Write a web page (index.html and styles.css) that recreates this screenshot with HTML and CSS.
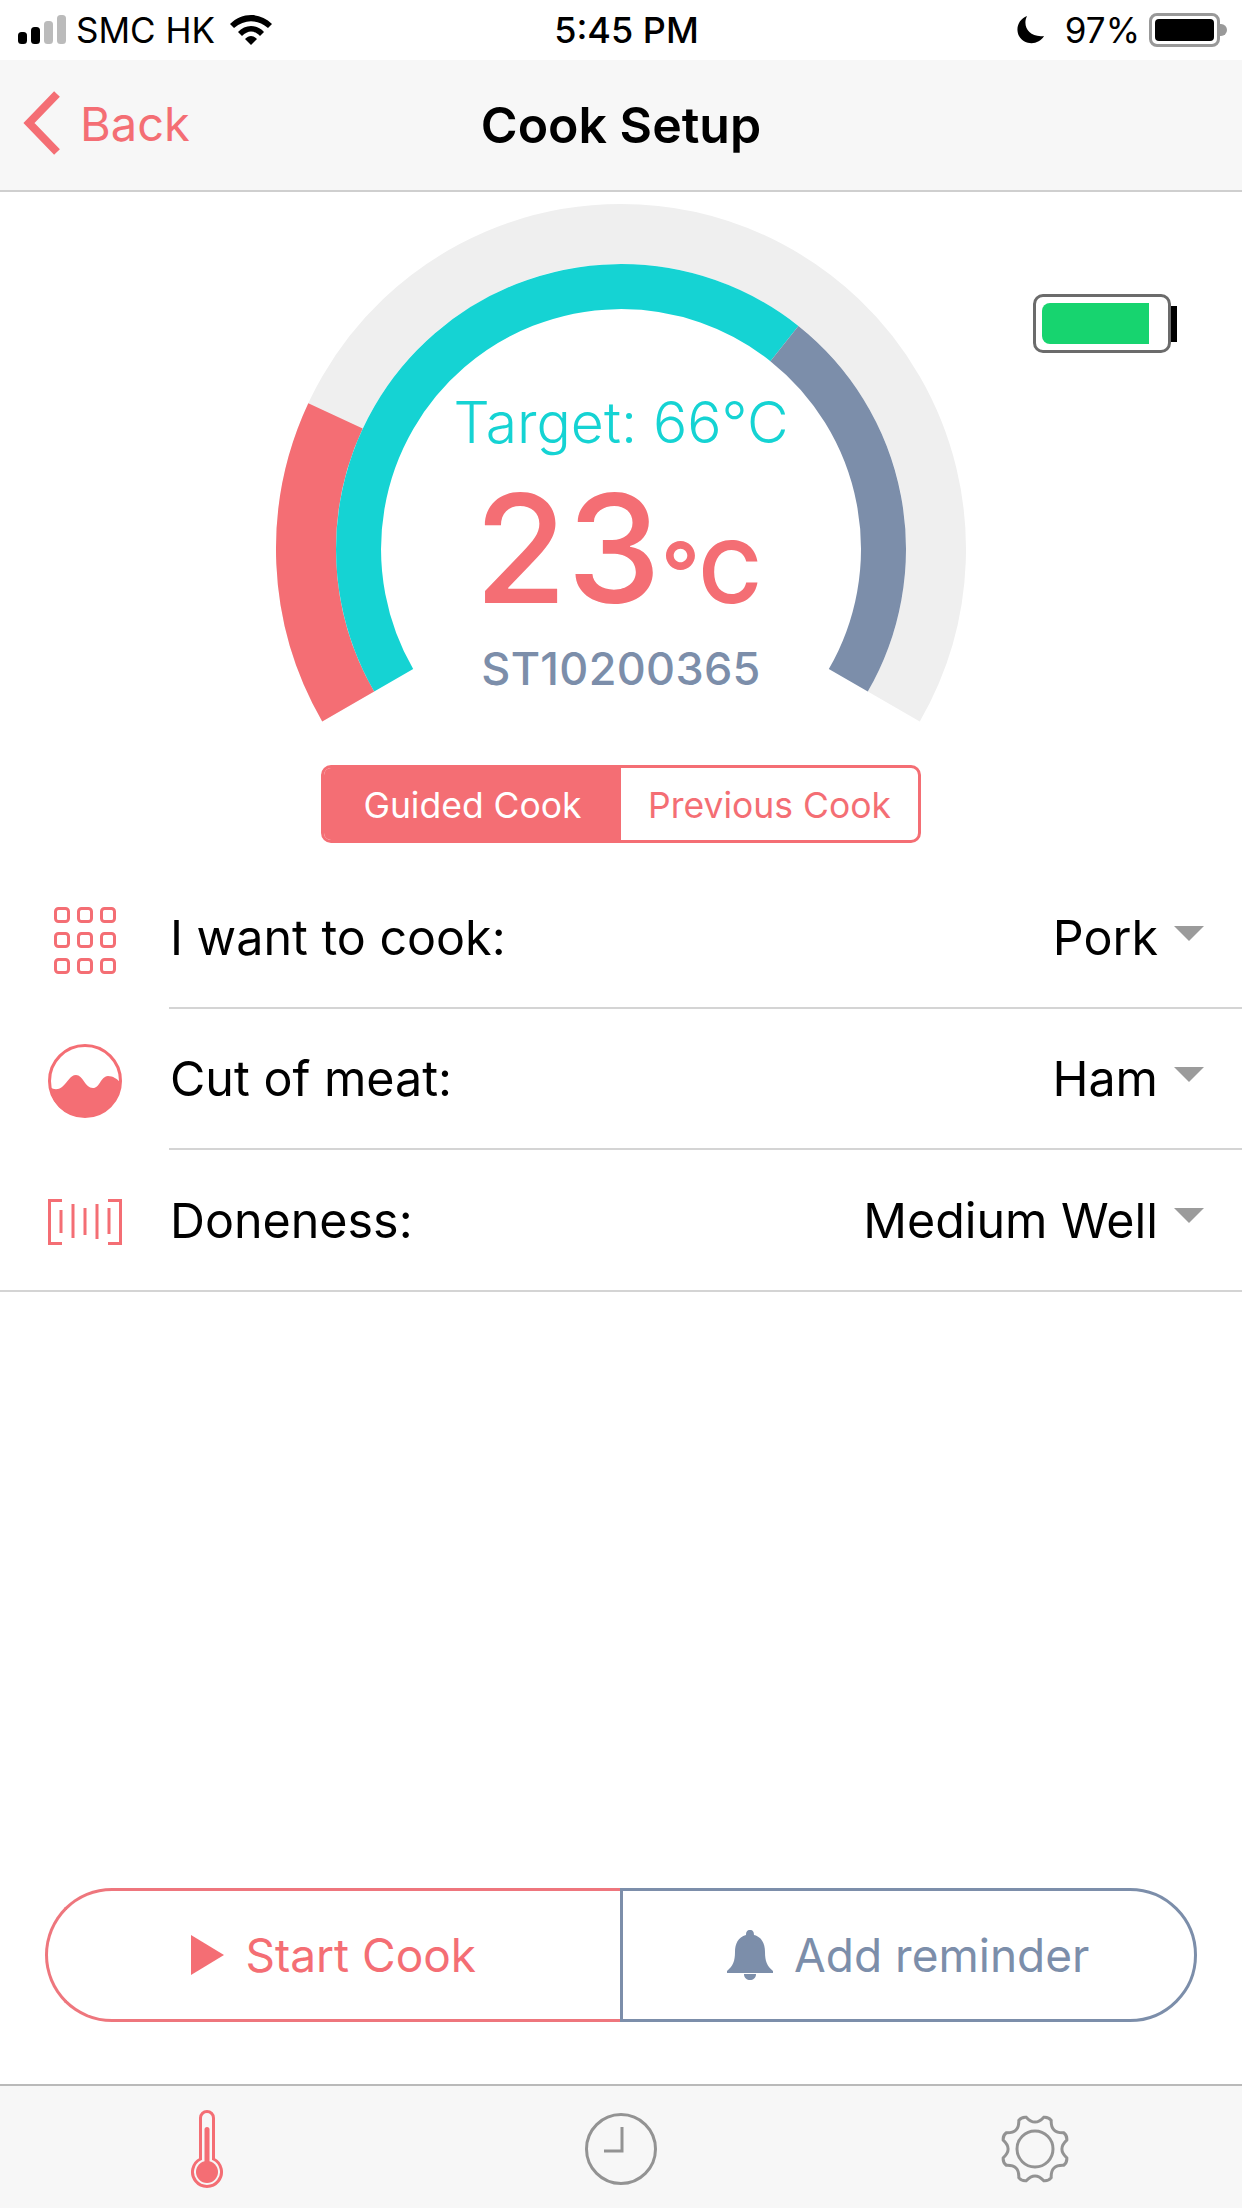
FILE: index.html

```html
<!DOCTYPE html>
<html lang="en">
<head>
  <meta charset="UTF-8" />
  <meta name="viewport" content="width=device-width, initial-scale=1.0"/>
  <title>Cook Setup</title>
  <link rel="stylesheet" href="styles.css">
</head>
<body>
  <div class="page">
    <div class="status-bar">
      <div class="status-left">
        <svg class="signal" width="48" height="30" viewBox="0 0 48 30">
          <rect x="0" y="17" width="9" height="12" rx="3.500" fill="#000"/>
          <rect x="13" y="12" width="9" height="17" rx="3.500" fill="#000"/>
          <rect x="26" y="6" width="9" height="23" rx="3.500" fill="#bbb"/>
          <rect x="39" y="0" width="9" height="29" rx="3.500" fill="#bbb"/>
        </svg>
        <span>SMC HK</span>
        <svg class="wifi" width="42" height="30" viewBox="0 0 42 30">
          <path d="M0 9 C12 -3 30 -3 42 9 L38 13 C27 4 15 4 4 13Z" fill="#000"/>
          <path d="M8 17 C15 9 27 9 34 17 L30 21 C24 15 18 15 12 21Z" fill="#000"/>
          <path d="M15 24 C19 20 23 20 27 24 L21 30Z" fill="#000"/>
        </svg>
      </div>
      <div class="status-time">5:45 PM</div>
      <div class="status-right">
        <svg class="moon" width="28" height="28" viewBox="0 0 28 28">
          <path d="M10 0 C5 10 12 22 27 20 C22 29 8 30 2 20 C-2 12 2 3 10 0Z" fill="#000"/>
        </svg>
        <span>97%</span>
        <div class="phone-batt"><div class="phone-batt-fill"></div></div>
        <div class="phone-batt-nub"></div>
      </div>
    </div>

    <div class="nav-bar">
      <div class="back">
        <svg width="40" height="64" viewBox="0 0 40 64">
          <path d="M34 3 L6 32 L34 61" fill="none" stroke="#f46e74" stroke-width="8"/>
        </svg>
        <span>Back</span>
      </div>
      <div class="nav-title">Cook Setup</div>
    </div>

    <div class="gauge">
      <svg class="gauge-svg" width="1242" height="570" viewBox="0 192 1242 570">
        <path d="M348.2 706.5 A315 315 0 1 1 893.8 706.5" fill="none" stroke="#efefef" stroke-width="60"/>
        <path d="M348.2 706.5 A315 315 0 0 1 335.5 415.9" fill="none" stroke="#f46e74" stroke-width="60"/>
        <path d="M393.7 680.3 A262.5 262.5 0 0 1 784.4 343.6" fill="none" stroke="#15d3d3" stroke-width="45"/>
        <path d="M784.4 343.6 A262.5 262.5 0 0 1 848.3 680.3" fill="none" stroke="#7c8eaa" stroke-width="45"/>
      </svg>
      <div class="gauge-text">
        <div class="target">Target: 66°C</div>
        <div class="temp">23<span class="temp-unit">°c</span></div>
        <div class="serial">ST10200365</div>
      </div>
      <div class="probe-batt">
        <div class="probe-batt-body"><div class="probe-batt-fill"></div></div>
        <div class="probe-batt-nub"></div>
      </div>
    </div>

    <div class="segment">
      <div class="segment-item segment-active">Guided Cook</div>
      <div class="segment-item">Previous Cook</div>
    </div>

    <div class="rows">
      <div class="row">
        <div class="row-icon">
          <svg width="62" height="67" viewBox="0 0 62 67" fill="none" stroke="#f46e74" stroke-width="3">
            <rect x="1.500" y="1.500" width="13" height="13" rx="3"/><rect x="24.500" y="1.500" width="13" height="13" rx="3"/><rect x="47.500" y="1.500" width="13" height="13" rx="3"/>
            <rect x="1.500" y="26.500" width="13" height="13" rx="3"/><rect x="24.500" y="26.500" width="13" height="13" rx="3"/><rect x="47.500" y="26.500" width="13" height="13" rx="3"/>
            <rect x="1.500" y="52.500" width="13" height="13" rx="3"/><rect x="24.500" y="52.500" width="13" height="13" rx="3"/><rect x="47.500" y="52.500" width="13" height="13" rx="3"/>
          </svg>
        </div>
        <div class="row-main">
          <span>I want to cook:</span>
          <span class="row-value">Pork<i class="caret"></i></span>
        </div>
      </div>
      <div class="row">
        <div class="row-icon">
          <svg width="74" height="74" viewBox="0 0 74 74">
            <circle cx="37" cy="37" r="35.500" fill="none" stroke="#f46e74" stroke-width="3"/>
            <path d="M2 43 C6 46 10 46 14 43 C20 38 22 31 28 31 C35 31 37 44 45 44 C52 44 52 33 60 32 C65 32 69 35 72 38 C72 58 56 73 37 73 C18 73 3 60 2 43Z" fill="#f46e74"/>
          </svg>
        </div>
        <div class="row-main">
          <span>Cut of meat:</span>
          <span class="row-value">Ham<i class="caret"></i></span>
        </div>
      </div>
      <div class="row row-last">
        <div class="row-icon">
          <svg width="74" height="46" viewBox="0 0 74 46" fill="none" stroke="#f46e74" stroke-width="3">
            <path d="M14 1.500 H1.500 V44.500 H14"/>
            <path d="M60 1.500 H72.500 V44.500 H60"/>
            <path d="M13 11 V34 M25 5 V39 M37 9 V36 M49 5 V40 M61 9 V35"/>
          </svg>
        </div>
        <div class="row-main">
          <span>Doneness:</span>
          <span class="row-value">Medium Well<i class="caret"></i></span>
        </div>
      </div>
    </div>

    <div class="spacer"></div>

    <div class="actions">
      <div class="action action-start">
        <svg width="33" height="40" viewBox="0 0 33 40"><path d="M0 0 L33 20 L0 40Z" fill="#f46e74"/></svg>
        <span>Start Cook</span>
      </div>
      <div class="action action-remind">
        <svg width="46" height="50" viewBox="0 0 46 50">
          <path d="M23 0 C26 0 27 2 27 5 C35 7 38 14 38 22 C38 31 40 36 46 41 L46 43 L0 43 L0 41 C6 36 8 31 8 22 C8 14 11 7 19 5 C19 2 20 0 23 0Z" fill="#7c8eaa"/>
          <path d="M17 44 H29 C29 48 26 50 23 50 C20 50 17 48 17 44Z" fill="#7c8eaa"/>
        </svg>
        <span>Add reminder</span>
      </div>
    </div>

    <div class="tab-bar">
      <div class="tab">
        <svg width="34" height="79" viewBox="0 0 34 79">
          <path d="M10.500 8 A6.500 6.500 0 0 1 23.500 8 V49 A14.500 14.500 0 1 1 10.500 49Z" fill="none" stroke="#f46e74" stroke-width="3"/>
          <rect x="14.500" y="17" width="5" height="42" rx="2.500" fill="#f46e74"/>
          <circle cx="17" cy="62" r="11" fill="#f46e74"/>
        </svg>
      </div>
      <div class="tab">
        <svg width="72" height="72" viewBox="0 0 72 72" fill="none" stroke="#939393" stroke-width="3">
          <circle cx="36" cy="36" r="34.500"/>
          <path d="M37 14 V38 H19"/>
        </svg>
      </div>
      <div class="tab">
        <svg width="70" height="68" viewBox="0 0 70 68" fill="none" stroke="#939393" stroke-width="3">
          <circle cx="35" cy="34" r="18"/>
          <path d="M26.200 2.200 Q35 12 43.800 2.200 Q48.400 1.700 51.200 5.300 Q50.600 18.400 63.700 17.800 Q67.300 20.600 66.800 25.200 Q57 34 66.800 42.800 Q67.300 47.400 63.700 50.200 Q50.600 49.600 51.200 62.700 Q48.400 66.300 43.800 65.800 Q35 56 26.200 65.800 Q21.600 66.300 18.800 62.700 Q19.400 49.600 6.300 50.200 Q2.700 47.400 3.200 42.800 Q13 34 3.200 25.200 Q2.700 20.600 6.300 17.800 Q19.400 18.400 18.800 5.300 Q21.600 1.700 26.200 2.200Z"/>
        </svg>
      </div>
    </div>
  </div>
</body>
</html>
```

FILE: styles.css

```css
* {
  box-sizing: border-box;
}
body {
  margin: 0;
  font-family: Inter, "Liberation Sans", sans-serif;
  background: #fff;
  color: #000;
}
.page {
  width: 1242px;
  height: 2208px;
  display: flex;
  flex-direction: column;
  overflow: hidden;
}

/* status bar */
.status-bar {
  height: 60px;
  display: flex;
  align-items: center;
  padding: 0 15px 0 18px;
  font-size: 35px;
}
.status-left, .status-right {
  flex: 1;
  display: flex;
  align-items: center;
}
.status-right {
  justify-content: flex-end;
}
.signal {
  margin-right: 10px;
}
.wifi {
  margin-left: 15px;
}
.status-time {
  margin-left: 8px;
  font-size: 36px;
  font-weight: 500;
}
.moon {
  margin-right: 20px;
}
.phone-batt {
  margin-left: 9px;
  width: 71px;
  height: 34px;
  border: 3px solid #999;
  border-radius: 8px;
  padding: 3px;
}
.phone-batt-fill {
  height: 100%;
  background: #000;
  border-radius: 4px;
}
.phone-batt-nub {
  width: 7px;
  height: 12px;
  background: #999;
  border-radius: 0 6px 6px 0;
}

/* nav */
.nav-bar {
  height: 132px;
  background: #f7f7f7;
  border-bottom: 2px solid #cfcfcf;
  display: grid;
  grid-template-columns: 1fr auto 1fr;
  align-items: center;
  padding-left: 23px;
  padding-right: 23px;
}
.back {
  display: flex;
  align-items: center;
  gap: 17px;
  margin-bottom: 4px;
  color: #f46e74;
  font-size: 47px;
}
.nav-title {
  font-size: 50px;
  font-weight: 600;
}

/* gauge */
.gauge {
  height: 570px;
  position: relative;
}
.gauge-svg {
  display: block;
}
.gauge-text {
  position: absolute;
  left: 0;
  right: 0;
  top: 193px;
  text-align: center;
}
.target {
  color: #15d3d3;
  font-size: 57px;
  font-weight: 300;
  line-height: 76px;
}
.temp {
  color: #f46e74;
  font-size: 150px;
  font-weight: 500;
  line-height: 144px;
  margin-top: 16px;
  margin-bottom: -3px;
  padding-right: 6px;
}
.temp-unit {
  font-size: 85px;
  font-weight: 600;
  text-transform: uppercase;
}
.serial {
  color: #7c8eaa;
  font-size: 45px;
  font-weight: 500;
  letter-spacing: 0.3px;
  line-height: 54px;
}
.probe-batt {
  position: absolute;
  left: 1033px;
  top: 102px;
  display: flex;
  align-items: center;
}
.probe-batt-body {
  width: 138px;
  height: 59px;
  border: 3px solid #6b6b6b;
  border-radius: 10px;
  padding: 6px 19px 6px 6px;
}
.probe-batt-fill {
  height: 100%;
  background: #17d46f;
  border-radius: 8px 0 0 8px;
}
.probe-batt-nub {
  width: 6px;
  height: 36px;
  background: #000;
}

/* segmented control */
.segment {
  margin: 3px 0 0 321px;
  width: 600px;
  height: 78px;
  display: flex;
  border: 3px solid #f46e74;
  border-radius: 10px;
  overflow: hidden;
}
.segment-item {
  flex: 1;
  display: flex;
  align-items: center;
  justify-content: center;
  padding-top: 3px;
  color: #f46e74;
  font-size: 35.5px;
}
.segment-active {
  background: #f46e74;
  color: #fff;
}

/* rows */
.rows {
  margin-top: 25px;
}
.row {
  height: 141px;
  display: flex;
}
.row-icon {
  width: 169px;
  flex: none;
  display: flex;
  align-items: center;
  justify-content: center;
  padding: 3px 47px 0 48px;
}
.row-main {
  flex: 1;
  display: flex;
  align-items: center;
  justify-content: space-between;
  border-bottom: 2px solid #d4d4d4;
  font-size: 48.4px;
  padding: 0 38px 0 1px;
}
.row-last {
  height: 142px;
  border-bottom: 2px solid #d4d4d4;
}
.row-last .row-main {
  border-bottom: none;
}
.row-value {
  display: flex;
  align-items: center;
}
.caret {
  width: 0;
  height: 0;
  margin: 0 0 9px 16px;
  border-left: 15px solid transparent;
  border-right: 15px solid transparent;
  border-top: 15px solid #9b9b9b;
}

.spacer {
  flex: 1;
}

/* bottom buttons */
.actions {
  margin: 0 45px 62px;
  height: 134px;
  display: flex;
}
.action {
  flex: 1;
  display: flex;
  align-items: center;
  justify-content: center;
  gap: 21px;
  font-size: 46px;
  border: 3px solid;
}
.action-start {
  color: #f46e74;
  border-color: #ee767d;
  border-right: none;
  border-radius: 67px 0 0 67px;
}
.action-remind {
  color: #7c8eaa;
  border-color: #7c8eaa;
  border-radius: 0 67px 67px 0;
}

/* tabs */
.tab-bar {
  height: 124px;
  background: #f7f7f7;
  border-top: 2px solid #b9b9b9;
  display: grid;
  grid-template-columns: repeat(3, 1fr);
}
.tab {
  display: flex;
  align-items: center;
  justify-content: center;
  padding-top: 4px;
}
```
